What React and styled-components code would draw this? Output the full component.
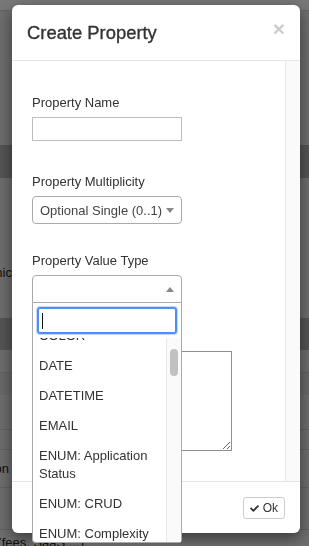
import React, { useLayoutEffect, useRef } from 'react';
import styled, { createGlobalStyle } from 'styled-components';
import { FaCheck } from 'react-icons/fa';

const GlobalStyle = createGlobalStyle`
  * { box-sizing: border-box; }
  html, body {
    margin: 0;
    padding: 0;
    height: 100%;
    overflow: hidden;
  }
  body {
    font-family: "Liberation Sans", Arial, Helvetica, sans-serif;
    font-size: 13px;
    color: #333;
  }
`;

const valueTypes = [
  'BOOLEAN',
  'COLOR',
  'DATE',
  'DATETIME',
  'EMAIL',
  'ENUM: Application Status',
  'ENUM: CRUD',
  'ENUM: Complexity',
  'ENUM: Criticality',
  'ENUM: Data Classification',
  'ENUM: Deployment Model',
  'ENUM: Frequency',
  'ENUM: Functional Fit',
  'ENUM: Hosting Type',
  'ENUM: Lifecycle Phase',
  'ENUM: Priority',
  'ENUM: Risk Level',
  'ENUM: Technical Fit',
  'ENUM: TIME',
  'HTML',
  'IMAGE',
  'INTEGER',
  'IP ADDRESS',
  'JSON',
  'LINK',
  'LIST',
  'MONEY',
  'MULTILINE TEXT',
  'NUMBER',
  'PERCENT',
  'PHONE',
  'RATING',
  'REFERENCE',
  'RICH TEXT',
  'STRING',
  'TAG',
  'TEXT',
  'TIME',
  'URL',
  'USER',
  'VERSION',
  'YEAR',
];

/* page behind the modal */
const Page = styled.div`
  height: 546px;
  overflow: hidden;
  background: #dcdcdc;
  color: #222;
`;

const NavBar = styled.div`
  height: 11px;
  background: #f0f0f0;
  border-bottom: 1px solid #c6c6c6;
`;

const Band = styled.div`
  display: flex;
  align-items: ${({ $align }) => $align || 'center'};
  height: ${({ $h }) => $h}px;
  padding: ${({ $pad }) => $pad || '0'};
  background: ${({ $tone }) => $tone || 'transparent'};
  border-bottom: ${({ $line }) => ($line ? '1px solid #c4c4c4' : 'none')};
  line-height: 18px;
  white-space: nowrap;
`;

const ClipCell = styled.div`
  display: flex;
  justify-content: flex-end;
  flex: 0 0 ${({ $w }) => $w}px;
  overflow: hidden;
`;

const Backdrop = styled.div`
  position: fixed;
  inset: 0;
  background: rgba(0, 0, 0, 0.5);
`;

/* modal */
const ModalWrap = styled.div`
  position: fixed;
  inset: 0;
  padding: 5px 0 0 12px;
`;

const Dialog = styled.div`
  position: relative;
  display: flex;
  flex-direction: column;
  width: 288px;
  height: 528px;
  background: #fff;
  border-radius: 6px;
  box-shadow: 0 5px 15px rgba(0, 0, 0, 0.5);
`;

const Header = styled.div`
  display: flex;
  justify-content: space-between;
  align-items: flex-start;
  flex-shrink: 0;
  height: 56px;
  padding: 15px;
  border-bottom: 1px solid #e5e5e5;
`;

const Title = styled.h4`
  margin: 0;
  font-size: 18.4px;
  line-height: 25px;
  font-weight: 500;
  color: #333;
  -webkit-text-stroke: 0.35px #333;
`;

const CloseButton = styled.button`
  margin-top: -2px;
  padding: 0;
  border: 0;
  background: transparent;
  font-family: inherit;
  font-size: 21px;
  font-weight: bold;
  line-height: 1;
  color: #000;
  opacity: 0.2;
`;

const Body = styled.div`
  display: flex;
  flex: 1;
  min-height: 0;
`;

const BodyContent = styled.div`
  flex: 1;
  min-width: 0;
  overflow: hidden;
  padding: 33px 20px 0;
`;

const ScrollTrack = styled.div`
  display: flex;
  flex-direction: column;
  flex: 0 0 15px;
  background: #fafafa;
  border-left: 1px solid #e8e8e8;
`;

const ScrollThumb = styled.div`
  width: 8px;
  height: 27px;
  margin: 11px 0 0 3px;
  border-radius: 4px;
  background: #c1c1c1;
`;

const FieldGroup = styled.div`
  margin-bottom: ${({ $space }) => $space}px;
`;

const Label = styled.label`
  display: block;
  margin-bottom: 5px;
  font-size: 13px;
  line-height: 18px;
  font-weight: normal;
`;

const TextInput = styled.input`
  display: block;
  width: 150px;
  height: 24px;
  padding: 0 4px;
  border: 1px solid #bdbdbd;
  border-radius: 0;
  font: inherit;
`;

const SelectBox = styled.div`
  display: flex;
  align-items: center;
  width: 150px;
  height: 28px;
  padding: 0 7px;
  background: #fff;
  border: 1px solid #aaa;
  border-radius: ${({ $open }) => ($open ? '4px 4px 0 0' : '4px')};
  font-size: 13px;
  color: #444;
`;

const Arrow = styled.span`
  margin-left: auto;
  width: 0;
  height: 0;
  border-style: solid;
  border-color: ${({ $up }) => ($up ? 'transparent transparent #888' : '#888 transparent transparent')};
  border-width: ${({ $up }) => ($up ? '0 4px 5px' : '5px 4px 0')};
`;

const Dropdown = styled.div`
  position: absolute;
  z-index: 5;
  width: 150px;
  background: #fff;
  border: 1px solid #aaa;
  border-top: none;
  border-radius: 0 0 4px 4px;
`;

const SearchWrap = styled.div`
  padding: 4px;
`;

const SearchField = styled.div`
  display: flex;
  align-items: center;
  height: 27px;
  padding-left: 3px;
  border: 2px solid #4d8ff2;
  border-radius: 3px;
  box-shadow: 0 0 0 1px rgba(77, 143, 242, 0.35);
`;

const Caret = styled.span`
  width: 1px;
  height: 16px;
  background: #111;
`;

const ResultsRow = styled.div`
  display: flex;
  height: 204px;
`;

const Results = styled.ul`
  flex: 1;
  min-width: 0;
  margin: 0;
  padding: 0;
  list-style: none;
  overflow: hidden;
`;

const Option = styled.li`
  padding: 6px;
  font-size: 13px;
  line-height: 18px;
  color: #333;
`;

const TextArea = styled.textarea`
  display: block;
  width: 200px;
  height: 100px;
  border: 1px solid #8f8f8f;
  font: inherit;
`;

const Footer = styled.div`
  display: flex;
  justify-content: flex-end;
  align-items: flex-start;
  flex-shrink: 0;
  height: 52px;
  padding: 15px;
  border-top: 1px solid #e5e5e5;
`;

const OkButton = styled.button`
  display: inline-flex;
  align-items: center;
  gap: 4px;
  height: 22px;
  padding: 0 6px;
  background: #fff;
  border: 1px solid #ccc;
  border-radius: 3px;
  font-family: inherit;
  font-size: 12px;
  color: #333;
`;

const ValueTypeSelect = () => {
  const listRef = useRef(null);

  useLayoutEffect(() => {
    if (listRef.current) listRef.current.scrollTop = 47;
  }, []);

  return (
    <div>
      <SelectBox $open>
        <Arrow $up />
      </SelectBox>
      <Dropdown>
        <SearchWrap>
          <SearchField>
            <Caret />
          </SearchField>
        </SearchWrap>
        <ResultsRow>
          <Results ref={listRef}>
            {valueTypes.map((type) => (
              <Option key={type}>{type}</Option>
            ))}
          </Results>
          <ScrollTrack>
            <ScrollThumb />
          </ScrollTrack>
        </ResultsRow>
      </Dropdown>
    </div>
  );
};

const App = () => (
  <>
    <GlobalStyle />
    <Page>
      <NavBar />
      <Band $h={134} />
      <Band $h={33} $tone="#a9a9a9" />
      <Band $h={140} $align="flex-end" $pad="0 0 36px">
        <ClipCell $w={12}>Geographic</ClipCell>
      </Band>
      <Band $h={32} $tone="#aaaaaa" />
      <Band $h={23} $line />
      <Band $h={22} $tone="#d2d2d2" />
      <Band $h={35} $line />
      <Band $h={20} $line />
      <Band $h={38} $line>
        <ClipCell $w={9}>Production</ClipCell>
      </Band>
      <Band $h={42} $line />
      <Band $h={30} $align="flex-start" $pad="4px 0 0 0">
        <ClipCell $w={84}>(fees, SaaS ...)</ClipCell>
      </Band>
    </Page>
    <Backdrop />
    <ModalWrap>
      <Dialog>
        <Header>
          <Title>Create Property</Title>
          <CloseButton type="button">×</CloseButton>
        </Header>
        <Body>
          <BodyContent>
            <FieldGroup $space={32}>
              <Label>Property Name</Label>
              <TextInput type="text" />
            </FieldGroup>
            <FieldGroup $space={28}>
              <Label>Property Multiplicity</Label>
              <SelectBox>
                Optional Single (0..1)
                <Arrow />
              </SelectBox>
            </FieldGroup>
            <FieldGroup $space={48}>
              <Label>Property Value Type</Label>
              <ValueTypeSelect />
            </FieldGroup>
            <FieldGroup $space={0}>
              <TextArea />
            </FieldGroup>
          </BodyContent>
          <ScrollTrack />
        </Body>
        <Footer>
          <OkButton type="button">
            <FaCheck size={9} />
            Ok
          </OkButton>
        </Footer>
      </Dialog>
    </ModalWrap>
  </>
);

export default App;
